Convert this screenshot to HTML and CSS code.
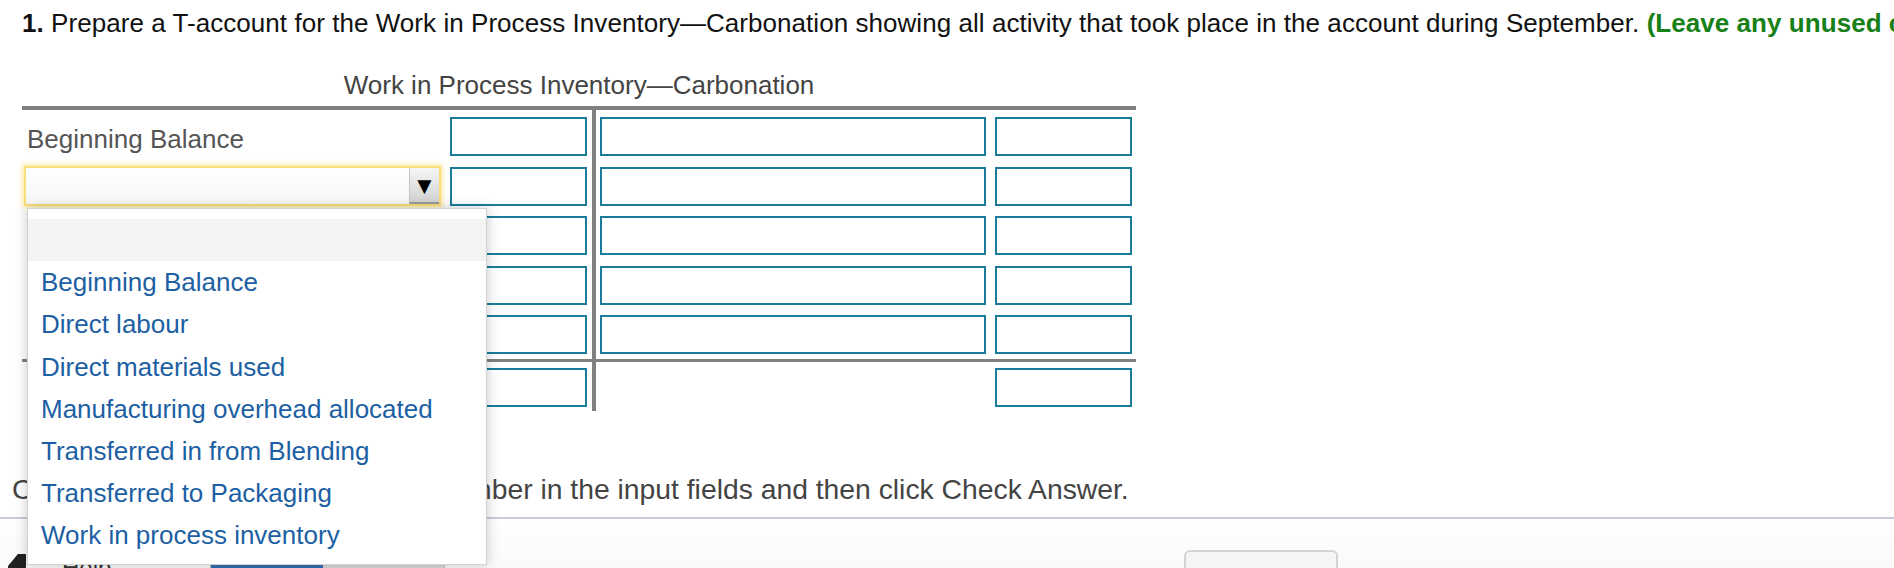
FILE: index.html
```html
<!DOCTYPE html>
<html lang="en">
<head>
<meta charset="utf-8">
<title>T-account</title>
<link rel="stylesheet" href="styles.css">
</head>
<body>
<div class="page">
  <p class="q"><b>1.</b> Prepare a T-account for the Work in Process Inventory—Carbonation showing all activity that took place in the account during September. <span class="note">(Leave any unused cells blank and enter all amounts as positive numbers.)</span></p>

  <section class="tacct">
    <div class="ttitle">Work in Process Inventory—Carbonation</div>
    <div class="tgrid">
      <div class="side left main">
        <div class="row"><span class="lbl">Beginning Balance</span><input class="box" type="text"></div>
        <div class="row">
          <div class="select-wrap">
            <div class="select"><span class="arrow">▼</span></div>
            <ul class="dd">
              <li class="blank"></li>
              <li>Beginning Balance</li>
              <li>Direct labour</li>
              <li>Direct materials used</li>
              <li>Manufacturing overhead allocated</li>
              <li>Transferred in from Blending</li>
              <li>Transferred to Packaging</li>
              <li>Work in process inventory</li>
            </ul>
          </div>
          <input class="box" type="text">
        </div>
        <div class="row"><input class="box" type="text"></div>
        <div class="row"><input class="box" type="text"></div>
        <div class="row"><input class="box" type="text"></div>
      </div>
      <div class="side right main">
        <div class="row"><input class="box wide" type="text"><input class="box" type="text"></div>
        <div class="row"><input class="box wide" type="text"><input class="box" type="text"></div>
        <div class="row"><input class="box wide" type="text"><input class="box" type="text"></div>
        <div class="row"><input class="box wide" type="text"><input class="box" type="text"></div>
        <div class="row"><input class="box wide" type="text"><input class="box" type="text"></div>
      </div>
      <div class="side left total">
        <div class="row"><input class="box" type="text"></div>
      </div>
      <div class="side right total">
        <div class="row"><input class="box" type="text"></div>
      </div>
    </div>
  </section>

  <p class="instr">Choose from any list or enter any number in the input fields and then click Check Answer.</p>

  <footer class="foot">
    <div class="parts">
      <span class="pico"></span>
      <span class="ptext">Help</span>
      <span class="pbar"><span class="pfill"></span></span>
    </div>
    <button class="clear" type="button">Clear All</button>
  </footer>
</div>
</body>
</html>
```

FILE: styles.css
```css
* { box-sizing: border-box; }

html, body {
  margin: 0;
  padding: 0;
  background: #fff;
}

body {
  width: 1894px;
  height: 568px;
  overflow: hidden;
  font-family: "Liberation Sans", Arial, Helvetica, sans-serif;
  font-size: 26px;
  color: #111;
}

.page {
  display: flex;
  flex-direction: column;
  height: 568px;
}

.q {
  margin: 0;
  padding: 8px 0 0 22px;
  line-height: 30px;
  white-space: nowrap;
  color: #111;
  letter-spacing: 0.05px;
}

.q b { font-weight: bold; }

.note {
  color: #178017;
  font-weight: bold;
}

.tacct {
  margin: 32px 0 0 22px;
  width: 1114px;
}

.ttitle {
  text-align: center;
  line-height: 30px;
  color: #444;
  margin-bottom: 6px;
}

.tgrid {
  display: grid;
  grid-template-columns: 574px 540px;
  border-top: 4px solid #808080;
}

.side.left { border-right: 4px solid #808080; }

.side.main {
  display: flex;
  flex-direction: column;
  gap: 10.5px;
  padding-top: 7px;
  padding-bottom: 5px;
  border-bottom: 3px solid #808080;
}

.side.total {
  padding-top: 6px;
  padding-bottom: 4px;
}

.left { padding-left: 2px; padding-right: 5px; }
.right { padding-left: 4px; padding-right: 4px; }

.row {
  display: flex;
  align-items: center;
  height: 39px;
  gap: 9px;
}

.left .row .box { margin-left: auto; }
.right.total .row { justify-content: flex-end; }

.box {
  display: block;
  width: 137px;
  height: 39px;
  border: 2px solid #1b7b9b;
  background: #fff;
  padding: 0;
  margin: 0;
  outline: none;
  font: inherit;
}

.box.wide { flex: 1; width: auto; }

.lbl {
  padding: 5px 0 0 3px;
  color: #555;
  line-height: 30px;
}

.select-wrap {
  position: relative;
  width: 419px;
  height: 40px;
}

.select {
  height: 40px;
  border: 2px solid #f8df7c;
  box-shadow: 0 0 5px 1px rgba(253, 220, 110, 0.8);
  background: linear-gradient(#ffffff, #f7f7f7);
  display: flex;
  justify-content: flex-end;
}

.arrow {
  width: 30px;
  height: 100%;
  background: linear-gradient(#f6f6f6, #d2d2d2);
  border-left: 1px solid #c4c4c4;
  border-bottom: 2px solid #9a9a9a;
  font-size: 24px;
  line-height: 36px;
  text-align: center;
  color: #000;
}

.dd {
  position: absolute;
  left: 3px;
  top: 42px;
  width: 460px;
  margin: 0;
  padding: 10px 0 7px;
  list-style: none;
  background: #fff;
  border: 1px solid #d2d2d2;
  box-shadow: 0 0 12px rgba(0, 0, 0, 0.22);
  z-index: 10;
}

.dd li {
  height: 42.2px;
  line-height: 42px;
  padding-left: 13px;
  color: #1d5fa3;
  white-space: nowrap;
}

.dd li.blank { background: #f3f3f3; }

.instr {
  margin: 63px 0 0 12px;
  font-size: 28.3px;
  line-height: 31px;
  color: #444;
  white-space: nowrap;
}

.foot {
  margin-top: 12px;
  flex: 1;
  border-top: 2px solid #c9ccd8;
  background: linear-gradient(#ffffff, #f7f7f7);
  display: flex;
  align-items: flex-start;
  padding: 31px 0 0 8px;
  position: relative;
}

.parts {
  display: flex;
  align-items: flex-start;
  gap: 36px;
  margin-top: 4px;
}

.pico {
  width: 18px;
  height: 20px;
  background: #222;
  clip-path: polygon(55% 0, 100% 0, 100% 100%, 0 100%, 0 60%);
}

.ptext {
  font-size: 24px;
  line-height: 20px;
  padding-top: 4px;
  color: #333;
}

.pbar {
  display: flex;
  width: 235px;
  height: 10px;
  margin-top: 8px;
  margin-left: 63px;
  background: #d8d8d8;
  border: 1px solid #c4c4c4;
}

.pfill {
  width: 112px;
  background: #2f6fb0;
}

.clear {
  margin-left: auto;
  margin-right: 556px;
  width: 154px;
  height: 44px;
  border: 2px solid #d4d4d4;
  border-radius: 6px;
  background: #f5f5f5;
  font: inherit;
  font-size: 22px;
  color: #333;
  padding: 12px 0 0;
  text-align: center;
  align-self: flex-start;
}
```
